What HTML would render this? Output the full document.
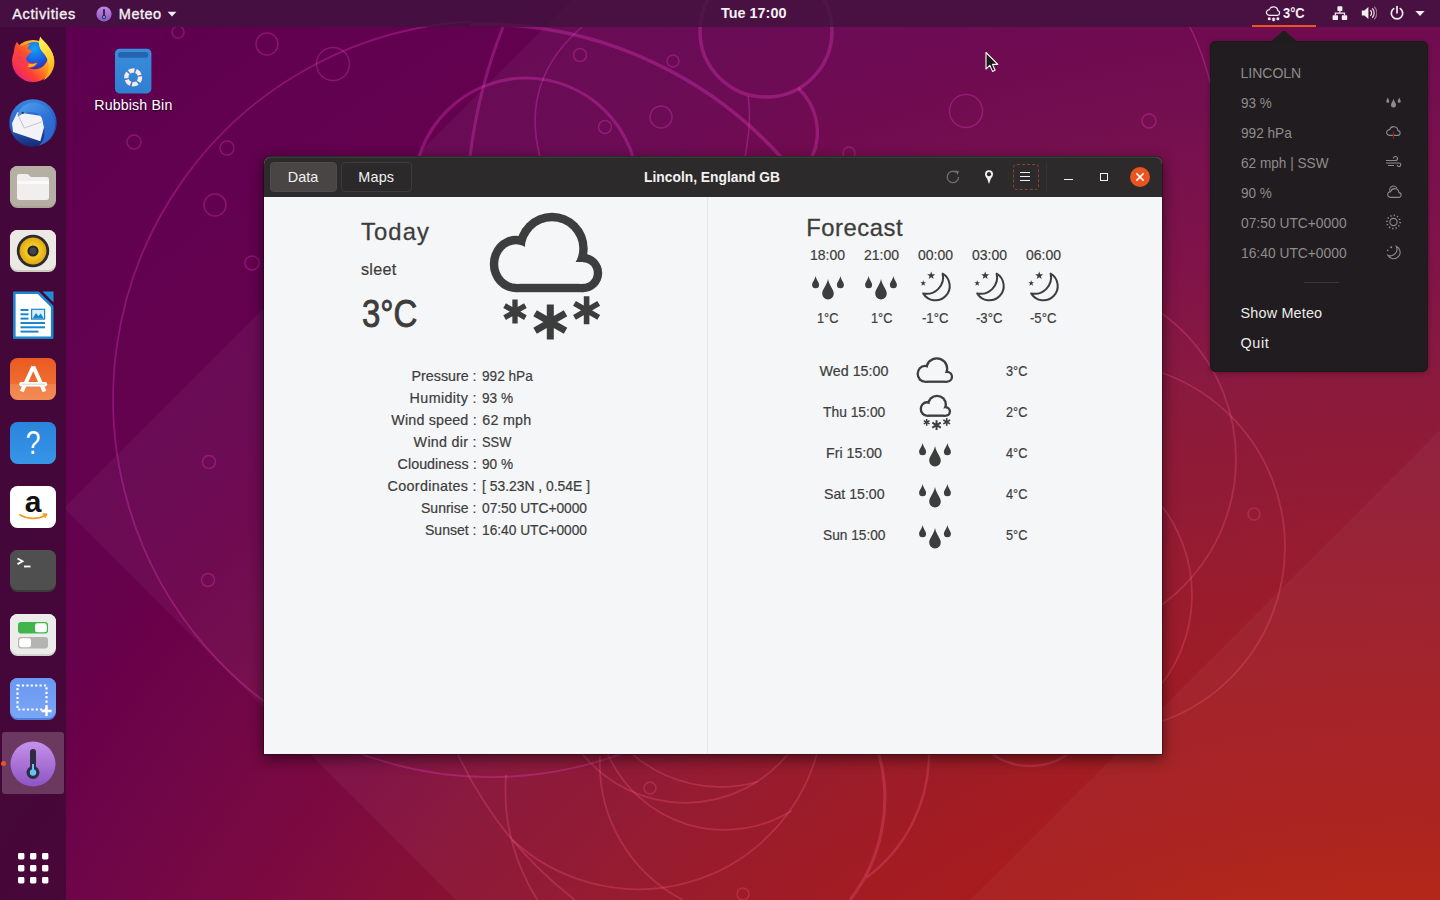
<!DOCTYPE html>
<html lang="en">
<head>
<meta charset="utf-8">
<title>Meteo - Lincoln, England GB</title>
<style>
*{box-sizing:border-box;margin:0;padding:0}
html,body{width:1440px;height:900px;overflow:hidden;background:#5e0050}
body{position:relative;font-family:"Liberation Sans","DejaVu Sans",sans-serif;font-size:14px;color:#3d3d3d;-webkit-font-smoothing:antialiased}
.abs{position:absolute}
.t{position:absolute;white-space:pre;line-height:1}

/* wallpaper */
#wall{position:absolute;left:0;top:0;width:1440px;height:900px;background:radial-gradient(circle 2062px at 1400px 1600px,#b21a06 30%,#ad1607 34%,#a31214 40%,#981220 47.3%,#851036 59.4%,#7c0a40 64.7%,#6d0549 73.5%,#6a0149 76.3%,#65024e 80.5%,#5e0050 100%)}
#wall svg{position:absolute;left:0;top:0}

/* top bar */
#topbar{position:absolute;left:0;top:0;width:1440px;height:27px;background:rgba(64,19,61,.8);color:#f2f0ee}
#topbar .t{color:#f4f2f0}

/* dock */
#dock{position:absolute;left:0;top:27px;width:66px;height:873px;background:rgba(56,10,50,.7)}
.di{position:absolute;left:9px;width:48px;height:48px}

/* window */
#win{position:absolute;left:264px;top:157px;width:898px;height:597px;border-radius:7px 7px 0 0;background:#f5f6f7;box-shadow:0 -1px 0 0 #2c2a2a,0 4px 14px 1px rgba(0,0,0,.5),0 0 0 1px rgba(30,10,20,.4)}
#hdr{position:absolute;left:0;top:0;width:898px;height:40px;border-radius:7px 7px 0 0;background:#2c2a2a;box-shadow:inset 0 1px 0 #3b3939}
#hdr .btn{position:absolute;top:5px;height:30px;border-radius:4px;border:1px solid #3e3c3b;color:#f0efee}
#hdr .t{color:#f3f2f1}
#content .t{color:#3d3d3d;-webkit-text-stroke:.2px #3d3d3d}
.sb{-webkit-text-stroke:.35px #f4f2f0}

/* popup */
#pop{position:absolute;left:1210px;top:41px;width:218px;height:331px;border-radius:6px;background:#201c1f;box-shadow:0 1px 5px rgba(0,0,0,.3),inset 0 0 0 1px #1a1a1a}
#pop .t{color:#8f8d8b}
#pop .w{color:#eeeceb}
</style>
</head>
<body>
<div id="wall">
<svg width="1440" height="900" viewBox="0 0 1440 900" fill="none">
 <defs><clipPath id="cb"><rect x="300" y="740" width="800" height="160"/></clipPath></defs>
 <polygon points="64,508 573,-1 1440,-1 1440,900 456,900" fill="#ffffff" opacity=".045"/>
 <polygon points="1440,430 1440,900 970,900" fill="#ffffff" opacity=".035"/>
 <g stroke="#ff48d6" stroke-opacity=".27">
  <path d="M471.2 21.5A378 378 0 1 0 680 726.4" stroke-width="1.8"/>
  <path d="M470 24.5 A401 401 0 0 1 800 180" stroke-width="3.6"/>
  <circle cx="766" cy="31" r="66" stroke-width="3.6"/>
  <path d="M798 88 A60 60 0 0 1 812 157" stroke-width="3.4"/>
  <circle cx="526" cy="190" r="112" stroke-width="3.2"/>
  <path d="M503 27 Q478 90 470 157" stroke-width="3"/>
  <path d="M582 27 Q520 80 540 157" stroke-width="1.6"/>
  <path d="M745 157 Q752 120 748 96" stroke-width="1.6"/>
  <path d="M1190 27 Q1204 55 1212 90" stroke-width="1.6"/>
  <g stroke-width="1.5">
   <circle cx="178" cy="32" r="6"/><circle cx="267" cy="44" r="11"/><circle cx="333" cy="64" r="16.5"/>
   <circle cx="134" cy="142" r="7"/><circle cx="227" cy="148" r="7"/><circle cx="215" cy="205" r="11"/>
   <circle cx="252" cy="263" r="7"/><circle cx="580" cy="55" r="6.5"/><circle cx="673" cy="61" r="6"/>
   <circle cx="661" cy="117" r="11"/><circle cx="605" cy="127" r="6.5"/><circle cx="849" cy="153" r="6"/>
   <circle cx="966" cy="111" r="16.5"/><circle cx="1149" cy="121" r="7"/>
   <circle cx="209" cy="462" r="6.5"/><circle cx="208" cy="580" r="6.5"/>
  </g>
 </g>
 <g stroke="#ff5c8a" stroke-opacity=".27" stroke-width="1.8">
  <circle cx="1056" cy="459" r="180"/>
  <circle cx="1100" cy="547" r="185"/>
  <circle cx="1046" cy="595" r="146"/>
  <circle cx="1254" cy="514" r="6" stroke-width="1.5"/>
  <circle cx="650" cy="788" r="6" stroke-width="1.5"/><circle cx="743" cy="894" r="6" stroke-width="1.5"/>
  <path d="M458.0 754.6A396.1 396.1 0 0 0 575.0 900.0"/><path d="M506.0 775.0A202.3 202.3 0 0 0 537.5 900.0"/><path d="M512.5 840.0A185.5 185.5 0 0 0 816.7 754.6"/><path d="M600.0 756.7A153.0 153.0 0 0 0 683.0 900.0"/><path d="M583.0 754.6A132.5 132.5 0 0 0 787.5 754.6"/><path d="M608.0 754.6A127.8 127.8 0 0 0 791.7 810.8"/><path d="M633.0 754.6A135.4 135.4 0 0 0 758.0 781.7"/><path d="M879.0 754.6A165.9 165.9 0 0 1 850.0 900.0" stroke-width="3.2"/><path d="M929.0 754.6A154.5 154.5 0 0 1 866.7 877.5" stroke-width="2.4"/>
  <circle cx="1030" cy="700" r="66" stroke-width="2.4"/>
 </g>
</svg>

</div>

<svg class="abs" style="left:114px;top:48px" width="38" height="46" viewBox="0 0 38 46"><defs><linearGradient id="rbg" x1="0" y1="0" x2="0" y2="1"><stop offset="0" stop-color="#3a8bdc"/><stop offset="1" stop-color="#3080d2"/></linearGradient></defs>
<rect x="1" y=".7" width="36.4" height="44.7" rx="4.6" fill="url(#rbg)"/><rect x="4" y="4" width="30.4" height="5.8" rx="2.9" fill="#2465b0"/>
<circle cx="19.2" cy="29.4" r="6.9" fill="none" stroke="#fbe9e6" stroke-width="4.3" stroke-dasharray="5.6 1.62" transform="rotate(-8 19.2 29.4)"/></svg><span class="t" style="left:94.3px;top:98.0px;font-size:14.2px;letter-spacing:0.15px;color:#fff;text-shadow:0 1px 2px rgba(0,0,0,.75)">Rubbish Bin</span>

<div id="win">
 <div id="hdr">
<div class="btn" style="left:6px;width:67px;background:#484544;border-color:#4e4b4a"></div>
<div class="btn" style="left:77px;width:71px;background:#2b2929"></div>
<span class="t" style="left:23.8px;top:12.6px;font-size:14.4px;letter-spacing:0.03px;">Data</span>
<span class="t" style="left:94.3px;top:12.6px;font-size:14.4px;letter-spacing:0.17px;">Maps</span>
<span class="t" style="left:380.4px;top:12.6px;font-size:14.4px;font-weight:700;transform:scaleX(0.9610);transform-origin:0 0;">Lincoln, England GB</span>
<svg class="abs" style="left:681px;top:12px" width="16" height="16" viewBox="0 0 16 16" fill="none"><path d="M13.6 8a5.7 5.7 0 1 1-2.3-4.6" stroke="#716f6d" stroke-width="1.3"/><path d="M10.2 1.2l3.9 1.1-1.6 3.6z" fill="#716f6d"/></svg>
<svg class="abs" style="left:717px;top:12px" width="16" height="16" viewBox="0 0 16 16"><path d="M8 1.2a4 4 0 0 0-4 4c0 1.7 1.2 3.2 2.2 4.6L8 15l1.8-5.2c1-1.4 2.2-2.9 2.2-4.6a4 4 0 0 0-4-4z" fill="#f3f2f1"/><circle cx="8" cy="5.2" r="2.1" fill="#2c2a2a"/></svg>
<div class="abs" style="left:748.5px;top:6.5px;width:26px;height:26px;border:1px dashed #8a4426;border-radius:4px"></div>
<svg class="abs" style="left:756px;top:14px" width="10" height="11" viewBox="0 0 10 11"><path d="M0 1.5h10M0 5.5h10M0 9.5h10" stroke="#f3f2f1" stroke-width="1.2"/></svg>
<div class="abs" style="left:782px;top:6px;width:1px;height:28px;background:#363433"></div>
<div class="abs" style="left:800px;top:21.5px;width:8.5px;height:1.3px;background:#f3f2f1"></div>
<div class="abs" style="left:836px;top:15.6px;width:8.4px;height:8.4px;border:1.4px solid #f3f2f1"></div>
<div class="abs" style="left:866px;top:10px;width:20px;height:20px;border-radius:50%;background:#e95420"></div>
<svg class="abs" style="left:871px;top:15px" width="10" height="10" viewBox="0 0 10 10"><path d="M1.4 1.4l7.2 7.2M8.6 1.4L1.4 8.6" stroke="#fff" stroke-width="1.5"/></svg>
 </div>
 <div id="content">
<div class="abs" style="left:443px;top:40px;width:1px;height:557px;background:#e7e8e9"></div>
<span class="t" style="left:97.0px;top:62.5px;font-size:23.8px;letter-spacing:1.12px;-webkit-text-stroke:.3px #3d3d3d;">Today</span>
<span class="t" style="left:97.0px;top:104.0px;font-size:16.2px;letter-spacing:0.27px;">sleet</span>
<span class="t" style="left:98.2px;top:138.2px;font-size:38.2px;transform:scaleX(0.8628);transform-origin:0 0;-webkit-text-stroke:.9px #3d3d3d;">3°C</span>
<svg class="abs" style="left:220.0px;top:50.0px" width="124.0" height="140.0" viewBox="484 207 124 140"><g fill="#3d3d3d"><ellipse cx="552" cy="248.5" rx="35.7" ry="35.7"/><ellipse cx="516" cy="264" rx="26.2" ry="28.2"/><ellipse cx="583" cy="273" rx="19.2" ry="19.2"/><rect x="516" y="262" width="67" height="30.2"/></g><g fill="#f5f6f7"><ellipse cx="552" cy="248.5" rx="27.3" ry="27.3"/><ellipse cx="516" cy="264" rx="17.8" ry="19.8"/><ellipse cx="583" cy="273" rx="10.8" ry="10.8"/><rect x="516" y="262" width="67" height="21.8"/></g><path d="M515.00 299.60L515.00 323.60M504.61 305.60L525.39 317.60M525.39 305.60L504.61 317.60" stroke="#3d3d3d" stroke-width="5.3" fill="none"/><path d="M550.30 304.40L550.30 339.60M535.06 313.20L565.54 330.80M565.54 313.20L535.06 330.80" stroke="#3d3d3d" stroke-width="7" fill="none"/><path d="M586.60 296.30L586.60 324.30M574.48 303.30L598.72 317.30M598.72 303.30L574.48 317.30" stroke="#3d3d3d" stroke-width="5.6" fill="none"/></svg>
<span class="t" style="left:147.6px;top:212.3px;font-size:14.3px;letter-spacing:-0.02px;">Pressure :</span>
<span class="t" style="left:218.3px;top:212.3px;font-size:14.3px;transform:scaleX(0.9518);transform-origin:0 0;">992 hPa</span>
<span class="t" style="left:145.6px;top:234.3px;font-size:14.3px;letter-spacing:0.38px;">Humidity :</span>
<span class="t" style="left:218.3px;top:234.3px;font-size:14.3px;transform:scaleX(0.9511);transform-origin:0 0;">93 %</span>
<span class="t" style="left:127.3px;top:256.2px;font-size:14.3px;letter-spacing:0.17px;">Wind speed :</span>
<span class="t" style="left:218.3px;top:256.2px;font-size:14.3px;letter-spacing:0.26px;">62 mph</span>
<span class="t" style="left:149.6px;top:278.2px;font-size:14.3px;letter-spacing:0.29px;">Wind dir :</span>
<span class="t" style="left:218.3px;top:278.2px;font-size:14.3px;transform:scaleX(0.8994);transform-origin:0 0;">SSW</span>
<span class="t" style="left:133.6px;top:300.1px;font-size:14.3px;letter-spacing:0.03px;">Cloudiness :</span>
<span class="t" style="left:218.3px;top:300.1px;font-size:14.3px;transform:scaleX(0.9511);transform-origin:0 0;">90 %</span>
<span class="t" style="left:123.6px;top:322.1px;font-size:14.3px;letter-spacing:0.33px;">Coordinates :</span>
<span class="t" style="left:218.3px;top:322.1px;font-size:14.3px;transform:scaleX(0.9705);transform-origin:0 0;">[ 53.23N , 0.54E ]</span>
<span class="t" style="left:157.3px;top:344.0px;font-size:14.3px;transform:scaleX(0.9801);transform-origin:0 0;">Sunrise :</span>
<span class="t" style="left:218.3px;top:344.0px;font-size:14.3px;transform:scaleX(0.9607);transform-origin:0 0;">07:50 UTC+0000</span>
<span class="t" style="left:161.1px;top:366.0px;font-size:14.3px;transform:scaleX(0.9815);transform-origin:0 0;">Sunset :</span>
<span class="t" style="left:218.3px;top:366.0px;font-size:14.3px;transform:scaleX(0.9607);transform-origin:0 0;">16:40 UTC+0000</span>
<span class="t" style="left:542.3px;top:58.9px;font-size:23.8px;letter-spacing:0.52px;-webkit-text-stroke:.3px #3d3d3d;">Forecast</span>
<span class="t" style="left:546.2px;top:91.0px;font-size:14.3px;transform:scaleX(0.9782);transform-origin:0 0;">18:00</span>
<svg class="abs" style="left:547.7px;top:119.0px" width="32" height="24" viewBox="0 0 32 24"><path d="M16.00 3.00C17.39 9.73 21.80 13.61 21.80 17.60A5.80 5.80 0 1 1 10.20 17.60C10.20 13.61 14.61 9.73 16.00 3.00ZM3.60 0.00C4.44 4.03 7.10 6.34 7.10 8.70A3.50 3.50 0 1 1 0.10 8.70C0.10 6.34 2.76 4.03 3.60 0.00ZM28.40 0.00C29.24 4.03 31.90 6.34 31.90 8.70A3.50 3.50 0 1 1 24.90 8.70C24.90 6.34 27.56 4.03 28.40 0.00Z" fill="#3d3d3d"/></svg>
<span class="t" style="left:553.0px;top:154.2px;font-size:14.3px;transform:scaleX(0.8917);transform-origin:0 0;">1°C</span>
<span class="t" style="left:599.9px;top:91.0px;font-size:14.3px;transform:scaleX(0.9782);transform-origin:0 0;">21:00</span>
<svg class="abs" style="left:601.4px;top:119.0px" width="32" height="24" viewBox="0 0 32 24"><path d="M16.00 3.00C17.39 9.73 21.80 13.61 21.80 17.60A5.80 5.80 0 1 1 10.20 17.60C10.20 13.61 14.61 9.73 16.00 3.00ZM3.60 0.00C4.44 4.03 7.10 6.34 7.10 8.70A3.50 3.50 0 1 1 0.10 8.70C0.10 6.34 2.76 4.03 3.60 0.00ZM28.40 0.00C29.24 4.03 31.90 6.34 31.90 8.70A3.50 3.50 0 1 1 24.90 8.70C24.90 6.34 27.56 4.03 28.40 0.00Z" fill="#3d3d3d"/></svg>
<span class="t" style="left:606.7px;top:154.2px;font-size:14.3px;transform:scaleX(0.8917);transform-origin:0 0;">1°C</span>
<span class="t" style="left:653.5px;top:91.0px;font-size:14.3px;transform:scaleX(0.9782);transform-origin:0 0;">00:00</span>
<svg class="abs" style="left:655.6px;top:114.3px" width="33" height="32" viewBox="0 0 33 32"><path d="M22.6 2.6A14.3 14.3 0 1 1 3.2 22.4A16.4 16.4 0 0 0 22.6 2.6Z" fill="none" stroke="#3d3d3d" stroke-width="2" stroke-linejoin="round"/><polygon points="11.20,0.40 12.24,3.17 15.19,3.30 12.88,5.15 13.67,8.00 11.20,6.36 8.73,8.00 9.52,5.15 7.21,3.30 10.16,3.17" fill="#3d3d3d"/><polygon points="3.20,9.20 3.94,11.18 6.05,11.27 4.40,12.59 4.96,14.63 3.20,13.46 1.44,14.63 2.00,12.59 0.35,11.27 2.46,11.18" fill="#3d3d3d"/></svg>
<span class="t" style="left:657.8px;top:154.2px;font-size:14.3px;transform:scaleX(0.9178);transform-origin:0 0;">-1°C</span>
<span class="t" style="left:707.5px;top:91.0px;font-size:14.3px;transform:scaleX(0.9782);transform-origin:0 0;">03:00</span>
<svg class="abs" style="left:709.6px;top:114.3px" width="33" height="32" viewBox="0 0 33 32"><path d="M22.6 2.6A14.3 14.3 0 1 1 3.2 22.4A16.4 16.4 0 0 0 22.6 2.6Z" fill="none" stroke="#3d3d3d" stroke-width="2" stroke-linejoin="round"/><polygon points="11.20,0.40 12.24,3.17 15.19,3.30 12.88,5.15 13.67,8.00 11.20,6.36 8.73,8.00 9.52,5.15 7.21,3.30 10.16,3.17" fill="#3d3d3d"/><polygon points="3.20,9.20 3.94,11.18 6.05,11.27 4.40,12.59 4.96,14.63 3.20,13.46 1.44,14.63 2.00,12.59 0.35,11.27 2.46,11.18" fill="#3d3d3d"/></svg>
<span class="t" style="left:711.8px;top:154.2px;font-size:14.3px;transform:scaleX(0.9178);transform-origin:0 0;">-3°C</span>
<span class="t" style="left:761.5px;top:91.0px;font-size:14.3px;transform:scaleX(0.9782);transform-origin:0 0;">06:00</span>
<svg class="abs" style="left:763.6px;top:114.3px" width="33" height="32" viewBox="0 0 33 32"><path d="M22.6 2.6A14.3 14.3 0 1 1 3.2 22.4A16.4 16.4 0 0 0 22.6 2.6Z" fill="none" stroke="#3d3d3d" stroke-width="2" stroke-linejoin="round"/><polygon points="11.20,0.40 12.24,3.17 15.19,3.30 12.88,5.15 13.67,8.00 11.20,6.36 8.73,8.00 9.52,5.15 7.21,3.30 10.16,3.17" fill="#3d3d3d"/><polygon points="3.20,9.20 3.94,11.18 6.05,11.27 4.40,12.59 4.96,14.63 3.20,13.46 1.44,14.63 2.00,12.59 0.35,11.27 2.46,11.18" fill="#3d3d3d"/></svg>
<span class="t" style="left:765.8px;top:154.2px;font-size:14.3px;transform:scaleX(0.9178);transform-origin:0 0;">-5°C</span>
<span class="t" style="left:555.5px;top:206.9px;font-size:14.3px;letter-spacing:0.01px;">Wed 15:00</span>
<span class="t" style="left:741.6px;top:206.9px;font-size:14.3px;transform:scaleX(0.8917);transform-origin:0 0;">3°C</span>
<svg class="abs" style="left:651.2px;top:198.5px" width="38.3" height="27.7" viewBox="486 210 116 84"><g fill="#3d3d3d"><ellipse cx="552" cy="248.5" rx="34.95" ry="34.95"/><ellipse cx="516" cy="264" rx="25.45" ry="27.45"/><ellipse cx="583" cy="273" rx="18.45" ry="18.45"/><rect x="516" y="262" width="67" height="29.45"/></g><g fill="#f5f6f7"><ellipse cx="552" cy="248.5" rx="28.05" ry="28.05"/><ellipse cx="516" cy="264" rx="18.55" ry="20.55"/><ellipse cx="583" cy="273" rx="11.55" ry="11.55"/><rect x="516" y="262" width="67" height="22.55"/></g></svg>
<span class="t" style="left:558.9px;top:247.9px;font-size:14.3px;transform:scaleX(0.9675);transform-origin:0 0;">Thu 15:00</span>
<span class="t" style="left:741.6px;top:247.9px;font-size:14.3px;transform:scaleX(0.8917);transform-origin:0 0;">2°C</span>
<svg class="abs" style="left:654.0px;top:236.2px" width="34.7" height="39.2" viewBox="484 207 124 140"><g fill="#3d3d3d"><ellipse cx="552" cy="248.5" rx="35.7" ry="35.7"/><ellipse cx="516" cy="264" rx="26.2" ry="28.2"/><ellipse cx="583" cy="273" rx="19.2" ry="19.2"/><rect x="516" y="262" width="67" height="30.2"/></g><g fill="#f5f6f7"><ellipse cx="552" cy="248.5" rx="27.3" ry="27.3"/><ellipse cx="516" cy="264" rx="17.8" ry="19.8"/><ellipse cx="583" cy="273" rx="10.8" ry="10.8"/><rect x="516" y="262" width="67" height="21.8"/></g><path d="M515.00 299.60L515.00 323.60M504.61 305.60L525.39 317.60M525.39 305.60L504.61 317.60" stroke="#3d3d3d" stroke-width="5.3" fill="none"/><path d="M550.30 304.40L550.30 339.60M535.06 313.20L565.54 330.80M565.54 313.20L535.06 330.80" stroke="#3d3d3d" stroke-width="7" fill="none"/><path d="M586.60 296.30L586.60 324.30M574.48 303.30L598.72 317.30M598.72 303.30L574.48 317.30" stroke="#3d3d3d" stroke-width="5.6" fill="none"/></svg>
<span class="t" style="left:562.0px;top:289.0px;font-size:14.3px;transform:scaleX(0.9925);transform-origin:0 0;">Fri 15:00</span>
<span class="t" style="left:741.6px;top:289.0px;font-size:14.3px;transform:scaleX(0.8917);transform-origin:0 0;">4°C</span>
<svg class="abs" style="left:655.3px;top:286.0px" width="32" height="24" viewBox="0 0 32 24"><path d="M16.00 3.00C17.39 9.73 21.80 13.61 21.80 17.60A5.80 5.80 0 1 1 10.20 17.60C10.20 13.61 14.61 9.73 16.00 3.00ZM3.60 0.00C4.44 4.03 7.10 6.34 7.10 8.70A3.50 3.50 0 1 1 0.10 8.70C0.10 6.34 2.76 4.03 3.60 0.00ZM28.40 0.00C29.24 4.03 31.90 6.34 31.90 8.70A3.50 3.50 0 1 1 24.90 8.70C24.90 6.34 27.56 4.03 28.40 0.00Z" fill="#3d3d3d"/></svg>
<span class="t" style="left:559.7px;top:330.0px;font-size:14.3px;transform:scaleX(0.9899);transform-origin:0 0;">Sat 15:00</span>
<span class="t" style="left:741.6px;top:330.0px;font-size:14.3px;transform:scaleX(0.8917);transform-origin:0 0;">4°C</span>
<svg class="abs" style="left:655.3px;top:327.1px" width="32" height="24" viewBox="0 0 32 24"><path d="M16.00 3.00C17.39 9.73 21.80 13.61 21.80 17.60A5.80 5.80 0 1 1 10.20 17.60C10.20 13.61 14.61 9.73 16.00 3.00ZM3.60 0.00C4.44 4.03 7.10 6.34 7.10 8.70A3.50 3.50 0 1 1 0.10 8.70C0.10 6.34 2.76 4.03 3.60 0.00ZM28.40 0.00C29.24 4.03 31.90 6.34 31.90 8.70A3.50 3.50 0 1 1 24.90 8.70C24.90 6.34 27.56 4.03 28.40 0.00Z" fill="#3d3d3d"/></svg>
<span class="t" style="left:558.8px;top:371.1px;font-size:14.3px;transform:scaleX(0.9585);transform-origin:0 0;">Sun 15:00</span>
<span class="t" style="left:741.6px;top:371.1px;font-size:14.3px;transform:scaleX(0.8917);transform-origin:0 0;">5°C</span>
<svg class="abs" style="left:655.3px;top:368.1px" width="32" height="24" viewBox="0 0 32 24"><path d="M16.00 3.00C17.39 9.73 21.80 13.61 21.80 17.60A5.80 5.80 0 1 1 10.20 17.60C10.20 13.61 14.61 9.73 16.00 3.00ZM3.60 0.00C4.44 4.03 7.10 6.34 7.10 8.70A3.50 3.50 0 1 1 0.10 8.70C0.10 6.34 2.76 4.03 3.60 0.00ZM28.40 0.00C29.24 4.03 31.90 6.34 31.90 8.70A3.50 3.50 0 1 1 24.90 8.70C24.90 6.34 27.56 4.03 28.40 0.00Z" fill="#3d3d3d"/></svg>
 </div>
</div>

<div id="dock">
<svg class="di" style="top:7.5px" width="48" height="48" viewBox="0 0 48 48"><defs><linearGradient id="ffo" x1=".9" y1=".1" x2=".1" y2=".9"><stop offset="0" stop-color="#ffe040"/><stop offset=".4" stop-color="#ff9a1e"/><stop offset=".72" stop-color="#ff3d33"/><stop offset="1" stop-color="#e61f86"/></linearGradient>
 <radialGradient id="ffb" cx=".5" cy=".25" r=".85"><stop offset="0" stop-color="#12a4f7"/><stop offset=".55" stop-color="#1d5ce0"/><stop offset="1" stop-color="#3b1f9c"/></radialGradient>
 <linearGradient id="fox" x1=".9" y1="0" x2=".1" y2="1"><stop offset="0" stop-color="#ff9a1e"/><stop offset=".5" stop-color="#ff4a2e"/><stop offset="1" stop-color="#f0287a"/></linearGradient>
 <linearGradient id="ffy" x1=".3" y1="0" x2=".6" y2="1"><stop offset="0" stop-color="#fff35a"/><stop offset=".55" stop-color="#ffd12c"/><stop offset="1" stop-color="#ff9d1e"/></linearGradient></defs><circle cx="24" cy="26" r="21" fill="url(#ffo)"/><circle cx="25.5" cy="20.6" r="13.6" fill="url(#ffb)"/>
<path d="M8 6.800C9 9 10.5 10.5 11.5 11.5C15 9.5 19 9.3 21.5 9.600C19.5 11 18.8 12.5 18.5 14C20 14.2 22 15 23.5 16.800C22 17.5 20.5 18 19.5 19.5C18.3 21.5 17 22 17.2 24C17.5 26.5 20 28 23 28.300C26.5 28.6 28.5 27.5 28.5 27.5C27 31.5 22.5 34 18 32.5C10 30.5 4.5 23 5 15.5C5.5 11 7 8.5 8 6.800Z" fill="url(#fox)"/>
<path d="M17.5 31.5C21 33 26 32 28.5 27.5C26 29 22 29.5 19 28.5C20.5 30.5 19.5 31.5 17.5 31.5Z" fill="#ffb01e"/>
<path d="M31.3 1.5C33 5 37 7 40 12C44 18 46.5 25 45 31C43.5 38 39 43 34 45.5C39 40 40.5 34 39.5 28C38.5 22 34.5 18.5 32 15C29.5 11 29.5 6 31.3 1.5Z" fill="url(#ffy)"/></svg>
<svg class="di" style="top:72.0px" width="48" height="48" viewBox="0 0 48 48"><defs><linearGradient id="tbb" x1=".3" y1="0" x2=".5" y2="1"><stop offset="0" stop-color="#3a86de"/><stop offset=".5" stop-color="#2560c4"/><stop offset="1" stop-color="#172a72"/></linearGradient>
 <linearGradient id="tbh" x1=".2" y1="0" x2=".8" y2="1"><stop offset="0" stop-color="#4a9bee"/><stop offset=".5" stop-color="#2e72d6"/><stop offset="1" stop-color="#2f5fc8"/></linearGradient></defs><circle cx="24" cy="24" r="23.7" fill="url(#tbb)"/>
<path d="M3 24.300L8.3 13.300L32.7 17L35 28.300L31.3 42.300L4 33Z" fill="#f3f3f7"/><path d="M8.3 14.5L15.3 29L33 22.8" fill="none" stroke="#c3c3cf" stroke-width="1"/>
<path d="M8.7 17.7C9 12 13 6.5 19 4.5C27 2 36 5.5 41 12C46 18 47.5 27 44.5 34C42 40 38 44 30 46.5C35 42 36.5 35 35 28.300C34.5 22 33.5 18.5 30 15.5C26 12.5 20 12.5 16 14C13 15 10.5 16.5 8.7 17.7Z" fill="url(#tbh)"/>
<circle cx="13.7" cy="13.8" r="1.1" fill="#4a2a14"/></svg>
<svg class="di" style="top:136.3px" width="48" height="48" viewBox="0 0 48 48"><rect x="1" y="3" width="46" height="42" rx="7.5" fill="#aaa396" /><rect x="1" y="3" width="46" height="40" rx="7.5" fill="#b6afa3"/><path d="M8 13.5a2.5 2.5 0 0 1 2.5-2.5h8l3.5 3h15.5a2.5 2.5 0 0 1 2.5 2.5v18a2.5 2.5 0 0 1-2.5 2.5h-27a2.5 2.5 0 0 1-2.5-2.5z" fill="#f1efed"/><path d="M8 18h32v3H8z" fill="#fbfaf9"/></svg>
<svg class="di" style="top:200.0px" width="48" height="48" viewBox="0 0 48 48"><defs><radialGradient id="rby" cx=".5" cy=".5" r=".5"><stop offset=".4" stop-color="#f7cf2a"/><stop offset="1" stop-color="#e0a810"/></radialGradient></defs><rect x="1" y="3" width="46" height="42" rx="7.5" fill="#cfc9c2" /><rect x="1" y="3" width="46" height="40" rx="7.5" fill="#ece8e3"/><circle cx="24" cy="24" r="16.2" fill="#2a2a30"/><circle cx="24" cy="24" r="13.4" fill="url(#rby)"/><circle cx="24" cy="24" r="5.6" fill="#26262c"/><circle cx="24" cy="24" r="3.4" fill="#45454a"/></svg>
<svg class="di" style="top:264.0px" width="48" height="48" viewBox="0 0 48 48"><path d="M5.3 1.8h24.2l13.7 13.7v31.200h-37.900z" fill="#fff" stroke="#1b86cc" stroke-width="2.6" stroke-linejoin="round"/><path d="M33.5 .5h11v11z" fill="#1f8fd6"/><g fill="#1b86cc"><rect x="11.5" y="18" width="8" height="2"/><rect x="11.5" y="22.3" width="8" height="2"/><rect x="11.5" y="26.6" width="8" height="2"/><rect x="11.5" y="31" width="24.5" height="2"/><rect x="11.5" y="35.3" width="24.5" height="2"/><rect x="11.5" y="39.6" width="18" height="2"/></g><rect x="22.6" y="18.3" width="13" height="9.8" fill="#d9eefa" stroke="#1b86cc" stroke-width="1.2"/><path d="M23.5 27.5l3.5-5.5 2.3 3 2.5-2.5 3 5z" fill="#1b86cc"/></svg>
<svg class="di" style="top:328.0px" width="48" height="48" viewBox="0 0 48 48"><defs><linearGradient id="usg" x1="0" y1="0" x2="0" y2="1"><stop offset="0" stop-color="#ea5a20"/><stop offset="1" stop-color="#f27a3c"/></linearGradient></defs><rect x="1" y="3" width="46" height="42" rx="7.5" fill="url(#usg)"/><path d="M1 29h46v8.5a7.5 7.5 0 0 1-7.5 7.5h-31a7.5 7.5 0 0 1-7.5-7.5z" fill="#fff" opacity=".13"/><path d="M24.3 11.5L12.8 36.5M24.3 11.5l11.2 25" stroke="#fff" stroke-width="4" fill="none" stroke-linecap="butt" stroke-linejoin="round"/><rect x="10.2" y="27" width="28" height="4.4" rx="2.2" fill="#fff"/><path d="M12.5 29.200h23.5" stroke="#d9d4d0" stroke-width="1"/></svg>
<svg class="di" style="top:392.0px" width="48" height="48" viewBox="0 0 48 48"><defs><linearGradient id="hpg" x1="0" y1="0" x2="0" y2="1"><stop offset="0" stop-color="#2a84dd"/><stop offset="1" stop-color="#3795e6"/></linearGradient></defs><rect x="1" y="3" width="46" height="42" rx="7.5" fill="url(#hpg)"/><text x="24" y="35.5" text-anchor="middle" font-family="Liberation Sans, sans-serif" font-size="33" fill="#fff" transform="translate(24 0) scale(.8 1) translate(-24 0)">?</text></svg>
<svg class="di" style="top:456.0px" width="48" height="48" viewBox="0 0 48 48"><rect x="1" y="3" width="46" height="42" rx="7.5" fill="#ffffff" /><text x="24" y="29" text-anchor="middle" font-family="Liberation Sans, sans-serif" font-weight="700" font-size="30" fill="#111">a</text><path d="M11 32c8 4.5 18 4.5 25 .5" stroke="#f59a1c" stroke-width="1.7" fill="none" stroke-linecap="round"/><path d="M33.5 31l4 .3-1.5 3.5" stroke="#f59a1c" stroke-width="1.6" fill="none"/></svg>
<svg class="di" style="top:520.0px" width="48" height="48" viewBox="0 0 48 48"><rect x="1" y="3" width="46" height="42" rx="7.5" fill="#3b3b3b" /><rect x="1" y="3" width="46" height="40" rx="7.5" fill="#4f4f4f"/><path d="M8.5 11.5l5 2.8-5 2.8" stroke="#fff" stroke-width="1.8" fill="none"/><path d="M15 19.5h6.5" stroke="#fff" stroke-width="1.8"/></svg>
<svg class="di" style="top:584.0px" width="48" height="48" viewBox="0 0 48 48"><rect x="1" y="3" width="46" height="42" rx="7.5" fill="#d3d3d0" /><rect x="1" y="3" width="46" height="40" rx="7.5" fill="#ececea"/><rect x="9" y="11" width="30" height="11.5" rx="3" fill="#3fb54a"/><rect x="26" y="12.2" width="11.8" height="9.1" rx="2.2" fill="#fff"/><rect x="9" y="26" width="30" height="11.5" rx="3" fill="#b4b4b2"/><rect x="10.2" y="27.2" width="11.8" height="9.1" rx="2.2" fill="#fff"/></svg>
<svg class="di" style="top:648.0px" width="48" height="48" viewBox="0 0 48 48"><defs><linearGradient id="scg" x1="0" y1="0" x2="0" y2="1"><stop offset="0" stop-color="#6a98f2"/><stop offset="1" stop-color="#7aa6f5"/></linearGradient></defs><rect x="1" y="3" width="46" height="42" rx="7.5" fill="#4f7fe0" /><rect x="1" y="3" width="46" height="40" rx="7.5" fill="url(#scg)"/><rect x="8.5" y="10.5" width="29" height="24" fill="none" stroke="#fff" stroke-width="2.2" stroke-dasharray="2.2 2.2"/><path d="M37.5 31v10M32.5 36h10" stroke="#fff" stroke-width="2.4"/></svg>
<div class="abs" style="left:2px;top:705px;width:62px;height:62px;border-radius:3px;background:rgba(255,255,255,.2)"></div>
<div class="abs" style="left:1px;top:733.5px;width:5px;height:5px;border-radius:50%;background:#e95420"></div>
<svg class="di" style="top:712.5px" width="48" height="48" viewBox="0 0 48 48"><defs><linearGradient id="mtg" x1="0" y1="0" x2="0" y2="1"><stop offset="0" stop-color="#c592ea"/><stop offset="1" stop-color="#8d54c3"/></linearGradient></defs><circle cx="24" cy="24" r="22.5" fill="url(#mtg)"/><rect x="21" y="9" width="6" height="23" rx="3" fill="#2e2b42"/><circle cx="24" cy="32.5" r="6.5" fill="#2e2b42"/><circle cx="24" cy="32.5" r="3.2" fill="#62c4f2"/><rect x="23" y="24" width="2" height="8" fill="#62c4f2"/></svg>
<svg class="abs" style="left:0;top:0" width="66" height="873" viewBox="0 0 66 873"><rect x="18" y="826" width="6.4" height="6.4" rx="1.4" fill="#fff"/><rect x="30" y="826" width="6.4" height="6.4" rx="1.4" fill="#fff"/><rect x="42" y="826" width="6.4" height="6.4" rx="1.4" fill="#fff"/><rect x="18" y="838" width="6.4" height="6.4" rx="1.4" fill="#fff"/><rect x="30" y="838" width="6.4" height="6.4" rx="1.4" fill="#fff"/><rect x="42" y="838" width="6.4" height="6.4" rx="1.4" fill="#fff"/><rect x="18" y="850" width="6.4" height="6.4" rx="1.4" fill="#fff"/><rect x="30" y="850" width="6.4" height="6.4" rx="1.4" fill="#fff"/><rect x="42" y="850" width="6.4" height="6.4" rx="1.4" fill="#fff"/></svg>
</div>

<div id="topbar">
<span class="t sb" style="left:12.2px;top:6.5px;font-size:14.5px;letter-spacing:0.64px;">Activities</span>
<svg class="abs" style="left:96px;top:6px" width="16" height="16" viewBox="0 0 16 16"><defs><linearGradient id="mg" x1="0" y1="0" x2="0" y2="1"><stop offset="0" stop-color="#c08ae6"/><stop offset="1" stop-color="#8e55c4"/></linearGradient></defs><circle cx="8" cy="8" r="7.6" fill="url(#mg)"/><rect x="7" y="3" width="2" height="7.5" rx="1" fill="#2d2a3e"/><circle cx="8" cy="11" r="2" fill="#2d2a3e"/><circle cx="8" cy="11" r="1" fill="#5fc3f0"/></svg>
<span class="t sb" style="left:118.8px;top:6.5px;font-size:14.5px;letter-spacing:0.50px;">Meteo</span>
<svg class="abs" style="left:167px;top:11px" width="10" height="6" viewBox="0 0 10 6"><path d="M0.6 0.8h8.8L5 5.4z" fill="#f2f0ee"/></svg>
<span class="t" style="left:721.1px;top:5.6px;font-size:14.4px;font-weight:700;">Tue 17:00</span>
<svg class="abs" style="left:1265px;top:4px" width="17" height="18" viewBox="0 0 17 18" fill="none" stroke="#f2f0ee" stroke-width="1.2"><path d="M4.2 11.4a2.9 2.9 0 0 1 .3-5.8 4.3 4.3 0 0 1 8.3 1 2.45 2.45 0 0 1-.4 4.8z"/><g stroke-width="1.1"><path d="M4.3 13.2v3M3 14l2.6 1.4M5.6 14L3 15.4"/><path d="M8.6 13.6v3.6M7 14.5l3.2 1.8M10.2 14.5L7 16.3"/><path d="M12.9 13.2v3M11.6 14l2.6 1.4M14.2 14l-2.6 1.4"/></g></svg>
<span class="t" style="left:1282.8px;top:6.2px;font-size:14.4px;font-weight:700;transform:scaleX(0.8942);transform-origin:0 0;">3°C</span>
<div class="abs" style="left:1252px;top:25px;width:64px;height:2px;background:#e95420"></div>
<svg class="abs" style="left:1332px;top:5px" width="16" height="16" viewBox="0 0 16 16" fill="#f2f0ee"><rect x="5.4" y="1.3" width="5" height="4.6" rx=".7"/><rect x=".6" y="10.2" width="5.4" height="4.8" rx=".7"/><rect x="9.8" y="10.2" width="5.4" height="4.8" rx=".7"/><path d="M7.9 5.9v2.300M3.300 10.2v-2h9.2v2" fill="none" stroke="#f2f0ee" stroke-width="1.2"/></svg>
<svg class="abs" style="left:1361px;top:5px" width="16" height="16" viewBox="0 0 16 16"><path d="M0.8 5.6h2.6L7.4 2v12L3.4 10.4H.8z" fill="#f2f0ee"/><path d="M9.4 5.2a4 4 0 0 1 0 5.6" stroke="#f2f0ee" stroke-width="1.3" fill="none"/><path d="M11.2 3.2a6.8 6.8 0 0 1 0 9.6" stroke="#f2f0ee" stroke-width="1.3" fill="none" opacity=".85"/><path d="M13.2 1.6a9 9 0 0 1 0 12.8" stroke="#f2f0ee" stroke-width="1.2" fill="none" opacity=".45"/></svg>
<svg class="abs" style="left:1389px;top:5px" width="16" height="16" viewBox="0 0 16 16" fill="none" stroke="#f2f0ee" stroke-width="1.7" stroke-linecap="round"><path d="M8 1.6v6.2"/><path d="M4.7 3.6a5.7 5.7 0 1 0 6.6 0"/></svg>
<svg class="abs" style="left:1415px;top:10px" width="10" height="7" viewBox="0 0 10 7"><path d="M0.4 0.9h9.2L5 6z" fill="#f2f0ee"/></svg>
</div>

<div id="pop">
<svg class="abs" style="left:60px;top:-11px" width="28" height="12" viewBox="0 0 28 12"><path d="M0 12L12.6 1.300Q14 0 15.4 1.300L28 12z" fill="#1f1c1e"/></svg>
<span class="t" style="left:30.5px;top:24.6px;font-size:14px;">LINCOLN</span>
<span class="t" style="left:30.5px;top:54.9px;font-size:14.3px;transform:scaleX(0.9450);transform-origin:0 0;">93 %</span>
<span class="t" style="left:30.5px;top:84.9px;font-size:14.3px;transform:scaleX(0.9537);transform-origin:0 0;">992 hPa</span>
<span class="t" style="left:30.5px;top:114.5px;font-size:14.3px;transform:scaleX(0.9519);transform-origin:0 0;">62 mph | SSW</span>
<span class="t" style="left:30.5px;top:144.8px;font-size:14.3px;transform:scaleX(0.9450);transform-origin:0 0;">90 %</span>
<span class="t" style="left:30.5px;top:174.9px;font-size:14.3px;transform:scaleX(0.9662);transform-origin:0 0;">07:50 UTC+0000</span>
<span class="t" style="left:30.5px;top:204.8px;font-size:14.3px;transform:scaleX(0.9662);transform-origin:0 0;">16:40 UTC+0000</span>
<div class="abs" style="left:94px;top:241px;width:35px;height:1px;background:#3b3939"></div>
<span class="t w" style="left:30.5px;top:264.7px;font-size:14.4px;letter-spacing:0.18px;">Show Meteo</span>
<span class="t w" style="left:30.5px;top:294.8px;font-size:14.4px;letter-spacing:0.63px;">Quit</span>
<svg class="abs" style="left:175px;top:53.0px" width="17" height="16" viewBox="0 0 17 16" fill="none" stroke="#8f8d8b" stroke-width="1.1"><path d="M8.5 4.6C9.00 7.68 11.00 9.00 11.00 10.90A2.5 2.5 0 1 1 6.00 10.90C6.00 9.00 8.00 7.68 8.5 4.6ZM2.8 3.2C3.11 5.16 4.35 6.00 4.35 7.25A1.55 1.55 0 1 1 1.25 7.25C1.25 6.00 2.49 5.16 2.8 3.2ZM14.2 3.2C14.51 5.16 15.75 6.00 15.75 7.25A1.55 1.55 0 1 1 12.65 7.25C12.65 6.00 13.89 5.16 14.2 3.2Z" fill="#8f8d8b" stroke="none"/></svg>
<svg class="abs" style="left:175px;top:83.0px" width="17" height="16" viewBox="0 0 17 16" fill="none" stroke="#8f8d8b" stroke-width="1.1"><path d="M4.4 11.400a2.9 2.9 0 0 1 .3-5.8 4.2 4.2 0 0 1 8.2 1 2.4 2.4 0 0 1-.4 4.8z"/><path d="M8.5 7v8" stroke="#8c1c1c" stroke-width="1.2"/></svg>
<svg class="abs" style="left:175px;top:113.0px" width="17" height="16" viewBox="0 0 17 16" fill="none" stroke="#8f8d8b" stroke-width="1.1"><path d="M1 6.500h9.500a2 2 0 1 0-2-2M1 9h13a1.8 1.8 0 1 1-1.8 1.8M3 11.500h6"/></svg>
<svg class="abs" style="left:175px;top:143.0px" width="17" height="16" viewBox="0 0 17 16" fill="none" stroke="#8f8d8b" stroke-width="1.1"><path d="M5.4 13.400a2.9 2.9 0 0 1 .3-5.8 4.2 4.2 0 0 1 8.2 1 2.4 2.4 0 0 1-.4 4.8z"/><path d="M5 7a3.6 3.6 0 0 1 7-2.5"/></svg>
<svg class="abs" style="left:175px;top:173.0px" width="17" height="16" viewBox="0 0 17 16" fill="none" stroke="#8f8d8b" stroke-width="1.1"><circle cx="8.5" cy="8" r="3.6"/><circle cx="8.5" cy="8" r="6.6" stroke-dasharray="1.3 2.150" stroke-width="1.6"/></svg>
<svg class="abs" style="left:175px;top:203.0px" width="17" height="16" viewBox="0 0 17 16" fill="none" stroke="#8f8d8b" stroke-width="1.1"><path d="M11.2 2.300A6.5 6.5 0 1 1 2.8 11.2A6.5 6.5 0 0 0 11.2 2.300Z"/><circle cx="6.2" cy="3.2" r="1" fill="#8f8d8b" stroke="none"/><circle cx="2.8" cy="6.4" r=".8" fill="#8f8d8b" stroke="none"/></svg>
</div>

<svg class="abs" style="left:984px;top:51px" width="16" height="22" viewBox="0 0 16 22"><path d="M2 1.500v16.500l3.9-3.6 2.6 6 2.6-1.1-2.6-5.9h5.3z" fill="#1a1a1a" stroke="#fff" stroke-width="1.1" stroke-linejoin="round"/></svg>
</body>
</html>
